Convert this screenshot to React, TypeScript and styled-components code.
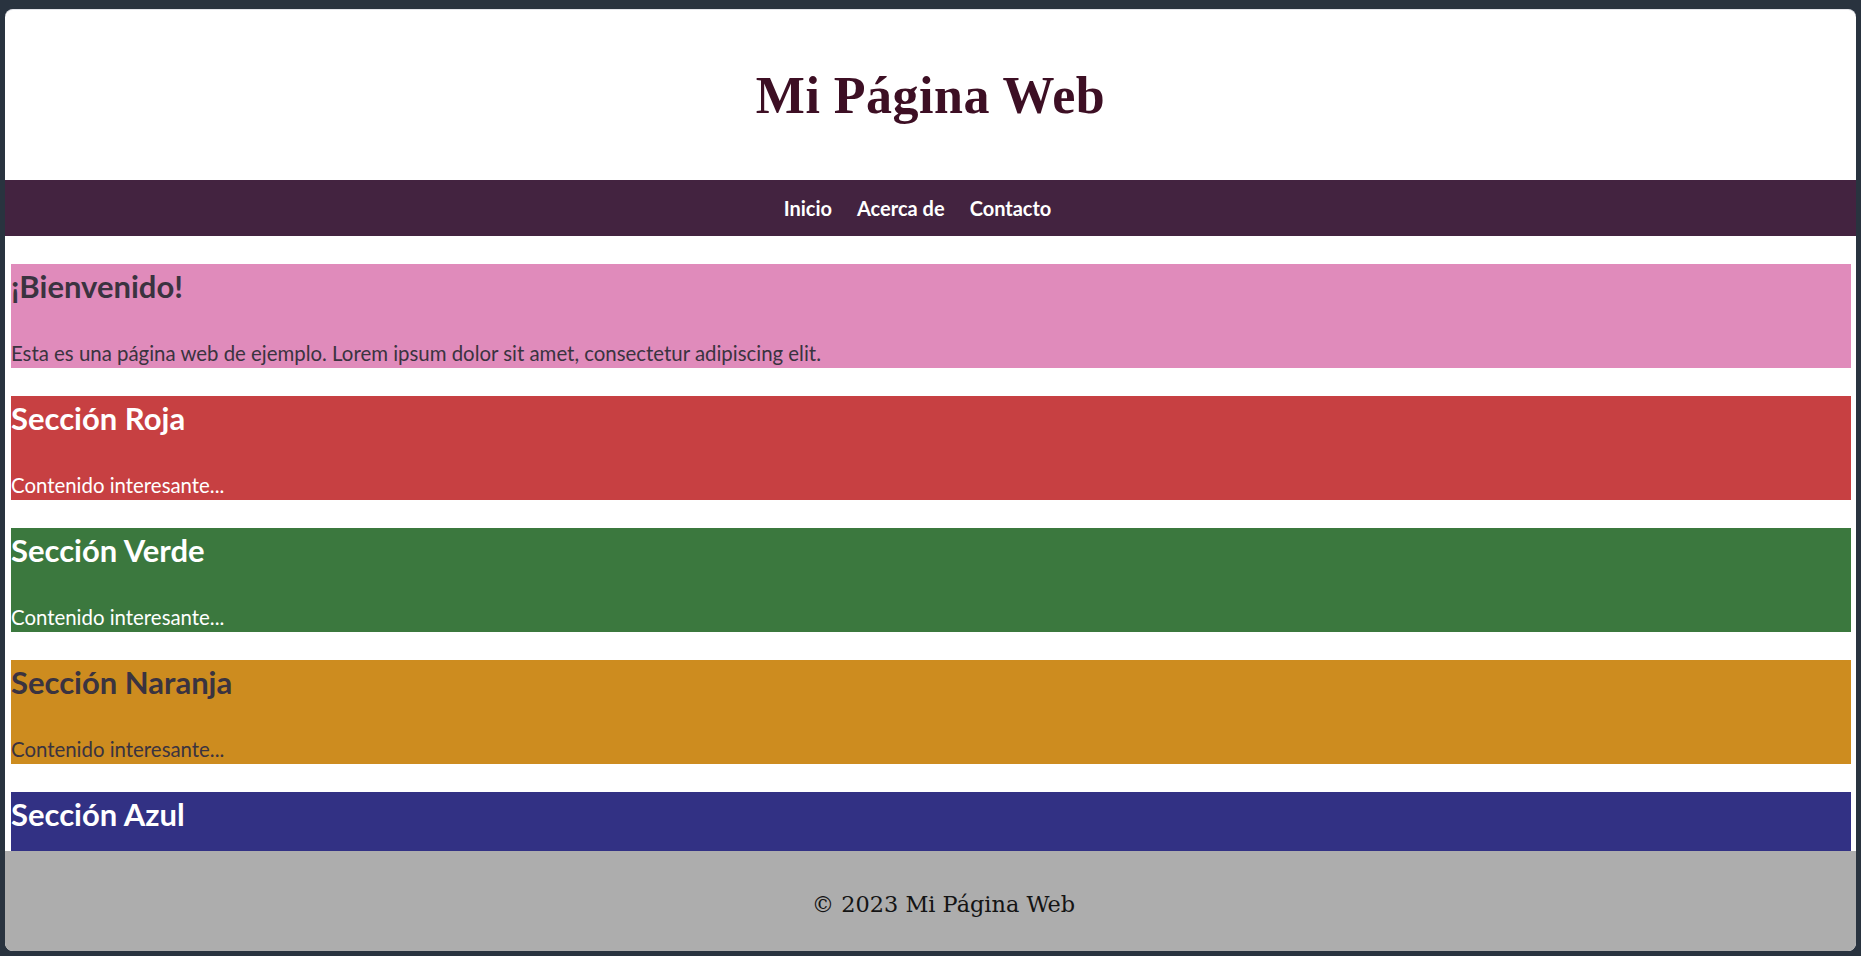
import React from 'react';
import styled, { createGlobalStyle } from 'styled-components';

const GlobalStyle = createGlobalStyle`
  html, body {
    margin: 0;
    padding: 0;
    height: 100%;
    background: #29333f;
    overflow: hidden;
  }
  #root {
    height: 100%;
  }
`;

const Frame = styled.div`
  height: 100vh;
  box-sizing: border-box;
  padding: 9px 5px 5px 5px;
`;

const Window = styled.div`
  height: 100%;
  display: flex;
  flex-direction: column;
  background: #ffffff;
  border-radius: 8px;
  overflow: hidden;
  border-top: 1px solid #e3e4ea;
  box-sizing: border-box;
`;

const Header = styled.header`
  height: 170px;
  flex: none;
  display: flex;
  align-items: center;
  justify-content: center;
`;

const Title = styled.h1`
  margin: 0;
  font-family: 'Liberation Serif', 'DejaVu Serif', serif;
  font-weight: 700;
  font-size: 52px;
  color: #3d0f24;
  letter-spacing: 0.5px;
`;

const Nav = styled.nav`
  height: 56px;
  flex: none;
  background: #432340;
  display: flex;
  align-items: center;
  justify-content: center;
  gap: 25px;
  padding-right: 26px;
`;

const NavLink = styled.a`
  font-family: Lato, 'Noto Sans', sans-serif;
  font-weight: 700;
  font-size: 20px;
  color: #ffffff;
  text-decoration: none;
  cursor: pointer;
`;

const Main = styled.main`
  flex: 1;
  min-height: 0;
  overflow: hidden;
  padding: 28px 5px 0 6px;
  display: flex;
  flex-direction: column;
  gap: 28px;
`;

const Section = styled.section<{ $bg: string; $fg: string }>`
  flex: none;
  height: 104px;
  box-sizing: border-box;
  background: ${(p) => p.$bg};
  color: ${(p) => p.$fg};
  display: flex;
  flex-direction: column;
  justify-content: space-between;
  font-family: Lato, 'Noto Sans', sans-serif;
`;

const Heading = styled.h2`
  margin: 0;
  padding-top: 4px;
  font-size: 31px;
  font-weight: 700;
  line-height: 36px;
`;

const Text = styled.p`
  margin: 0;
  padding-bottom: 3px;
  font-size: 20.4px;
  line-height: 24px;
`;

const Footer = styled.footer`
  height: 100px;
  flex: none;
  background: #adadad;
  display: flex;
  align-items: center;
  justify-content: center;
`;

const FooterText = styled.p`
  margin: 0;
  padding: 6px 0 0 26px;
  font-family: 'DejaVu Serif', 'Liberation Serif', serif;
  font-size: 22.4px;
  color: #141414;
`;

const sections = [
  {
    title: '¡Bienvenido!',
    text: 'Esta es una página web de ejemplo. Lorem ipsum dolor sit amet, consectetur adipiscing elit.',
    bg: '#e08bbb',
    fg: '#3a3340',
  },
  { title: 'Sección Roja', text: 'Contenido interesante...', bg: '#c74042', fg: '#ffffff' },
  { title: 'Sección Verde', text: 'Contenido interesante...', bg: '#3b783e', fg: '#ffffff' },
  { title: 'Sección Naranja', text: 'Contenido interesante...', bg: '#cd8c1f', fg: '#3a3340' },
  { title: 'Sección Azul', text: 'Contenido interesante...', bg: '#323184', fg: '#ffffff' },
];

export default function App() {
  return (
    <>
      <GlobalStyle />
      <Frame>
        <Window>
          <Header>
            <Title>Mi Página Web</Title>
          </Header>
          <Nav>
            <NavLink>Inicio</NavLink>
            <NavLink>Acerca de</NavLink>
            <NavLink>Contacto</NavLink>
          </Nav>
          <Main>
            {sections.map((s) => (
              <Section key={s.title} $bg={s.bg} $fg={s.fg}>
                <Heading>{s.title}</Heading>
                <Text>{s.text}</Text>
              </Section>
            ))}
          </Main>
          <Footer>
            <FooterText>© 2023 Mi Página Web</FooterText>
          </Footer>
        </Window>
      </Frame>
    </>
  );
}
